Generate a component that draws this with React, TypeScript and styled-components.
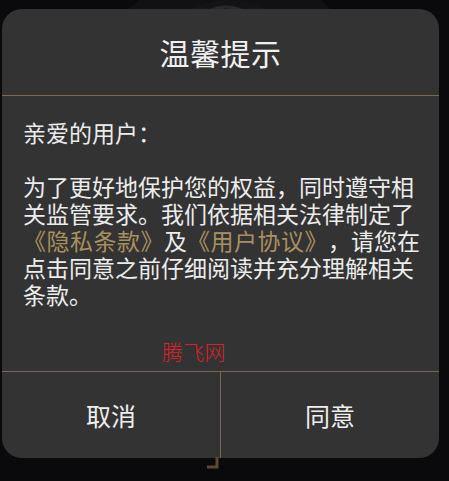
import styled, { createGlobalStyle } from "styled-components";

const GlobalStyle = createGlobalStyle`
  html, body {
    margin: 0;
    padding: 0;
    background: #0a0a0c;
  }
  body {
    font-family: "Noto Sans CJK SC", "Noto Sans", sans-serif;
  }
`;

const Screen = styled.div`
  position: relative;
  width: 449px;
  height: 481px;
  overflow: hidden;
  background: #0a0a0c;
`;

const Backdrop = styled.svg`
  position: absolute;
  left: 0;
  top: 0;
`;

const Dialog = styled.div`
  position: relative;
  margin: 9px 0 0 2px;
  width: 437px;
  height: 449px;
  background: #333333;
  border-radius: 20px;
  display: flex;
  flex-direction: column;
  overflow: hidden;
`;

const Title = styled.h1`
  margin: 0;
  height: 86px;
  display: flex;
  align-items: center;
  justify-content: center;
  font-size: 30px;
  font-weight: 400;
  color: #f0f0f0;
  letter-spacing: 0.5px;
`;

const Rule = styled.div`
  height: 1px;
  flex-shrink: 0;
  background: #7c6a4c;
`;

const Body = styled.div`
  flex: 1;
  padding: 23px 18px 0 21px;
  font-size: 23px;
  line-height: 27px;
  color: #ececec;
  white-space: pre-wrap;
  text-spacing-trim: space-all;
`;

const Link = styled.span`
  color: #a8915f;
  letter-spacing: 0.5px;
`;

const Watermark = styled.div`
  margin-top: 31px;
  margin-left: 139px;
  font-size: 21px;
  line-height: 24px;
  font-weight: 300;
  color: #d8232a;
  letter-spacing: 0.3px;
`;

const Actions = styled.div`
  height: 86px;
  display: flex;
`;

const Action = styled.button<{ $divider?: boolean }>`
  flex: 1;
  border: none;
  background: transparent;
  padding: 0;
  font-family: inherit;
  font-size: 25px;
  color: #eeeeee;
  border-left: ${({ $divider }) => ($divider ? "1px solid #7c6a4c" : "none")};
`;

const Hook = styled.svg`
  position: absolute;
  left: 206px;
  top: 457px;
`;

export default function App() {
  return (
    <Screen>
      <GlobalStyle />
      <Backdrop width="449" height="40" viewBox="0 0 449 40">
        <circle cx="230" cy="120" r="150" fill="#111113" />
        <circle cx="228" cy="80" r="80" fill="#141416" />
        <circle cx="226" cy="45" r="38" fill="none" stroke="#2a2a2c" strokeWidth="3" />
      </Backdrop>
      <Dialog>
        <Title>温馨提示</Title>
        <Rule />
        <Body>
          {"亲爱的用户：\n\n为了更好地保护您的权益，同时遵守相关监管要求。我们依据相关法律制定了"}
          <Link>《隐私条款》</Link>
          {"及"}
          <Link>《用户协议》</Link>
          {"，请您在点击同意之前仔细阅读并充分理解相关条款。"}
          <Watermark>腾飞网</Watermark>
        </Body>
        <Rule />
        <Actions>
          <Action>取消</Action>
          <Action $divider>同意</Action>
        </Actions>
      </Dialog>
      <Hook width="14" height="14" viewBox="0 0 14 14">
        <path d="M11 0 V10 H1" fill="none" stroke="#5a4a30" strokeWidth="3" />
      </Hook>
    </Screen>
  );
}
